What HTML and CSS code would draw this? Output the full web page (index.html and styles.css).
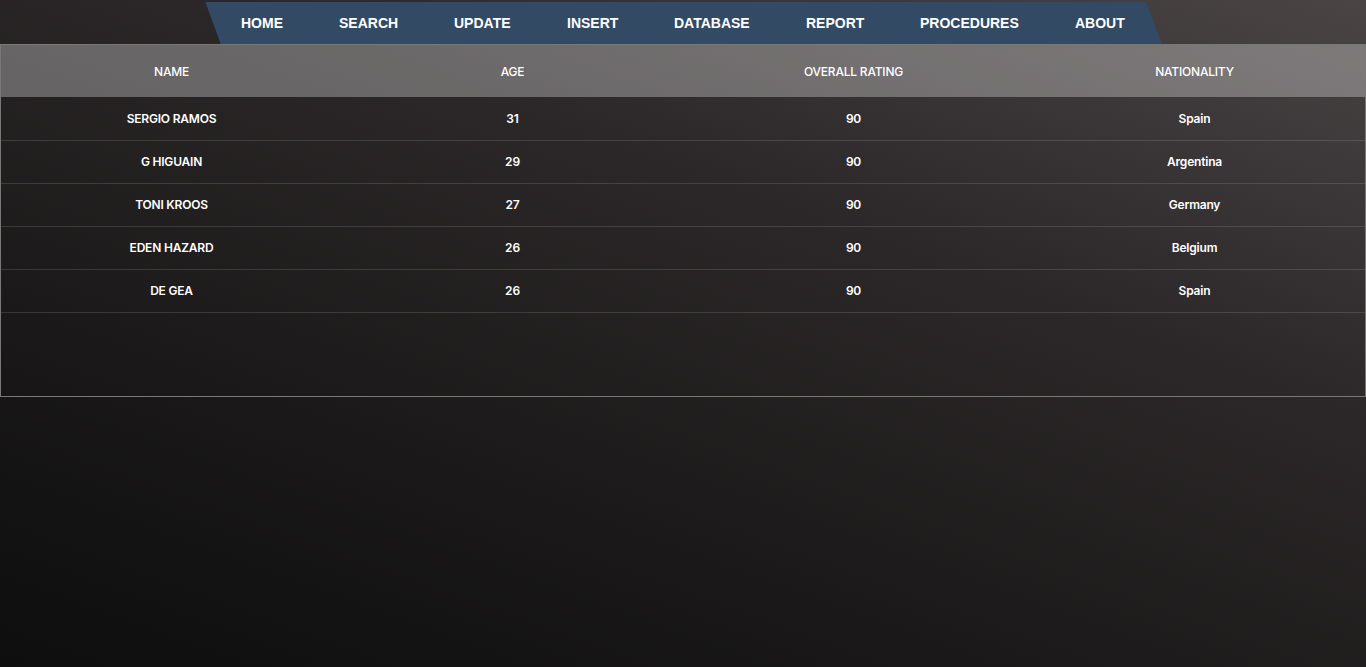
FILE: index.html
```html
<!DOCTYPE html>
<html lang="en">
<head>
<meta charset="utf-8">
<title>Players</title>
<link rel="stylesheet" href="styles.css">
</head>
<body>
<header class="topbar">
  <nav class="menu">
    <a class="menu-item" href="#"><span>HOME</span></a>
    <a class="menu-item" href="#"><span>SEARCH</span></a>
    <a class="menu-item" href="#"><span>UPDATE</span></a>
    <a class="menu-item" href="#"><span>INSERT</span></a>
    <a class="menu-item" href="#"><span>DATABASE</span></a>
    <a class="menu-item" href="#"><span>REPORT</span></a>
    <a class="menu-item" href="#"><span>PROCEDURES</span></a>
    <a class="menu-item" href="#"><span>ABOUT</span></a>
  </nav>
</header>
<main class="table-wrap">
  <table class="players">
    <thead>
      <tr><th>NAME</th><th>AGE</th><th>OVERALL RATING</th><th>NATIONALITY</th></tr>
    </thead>
    <tbody>
      <tr><td>SERGIO RAMOS</td><td>31</td><td>90</td><td>Spain</td></tr>
      <tr><td>G HIGUAIN</td><td>29</td><td>90</td><td>Argentina</td></tr>
      <tr><td>TONI KROOS</td><td>27</td><td>90</td><td>Germany</td></tr>
      <tr><td>EDEN HAZARD</td><td>26</td><td>90</td><td>Belgium</td></tr>
      <tr><td>DE GEA</td><td>26</td><td>90</td><td>Spain</td></tr>
    </tbody>
  </table>
</main>
</body>
</html>
```

FILE: styles.css
```css
* { box-sizing: border-box; }

html, body {
  margin: 0;
  height: 100%;
}

body {
  min-height: 667px;
  background: linear-gradient(200deg, #4a4445 0%, #2c2829 35%, #1a1818 70%, #0e0e0e 100%);
  font-family: "Inter", "Roboto", sans-serif;
  color: #ffffff;
  overflow: hidden;
}

.topbar {
  height: 44px;
  padding-top: 2px;
  display: flex;
  justify-content: center;
}

.menu {
  display: flex;
  height: 42px;
  padding: 0 1px 0 0;
  background: #324a64;
  transform: skewX(20deg);
}

.menu-item {
  display: flex;
  align-items: center;
  padding: 0 28px;
  color: #ffffff;
  text-decoration: none;
  font-family: "Liberation Sans", Arial, sans-serif;
  font-weight: 700;
  font-size: 14px;
}

.menu-item span {
  display: block;
  transform: skewX(-20deg);
}

.table-wrap {
  height: 353px;
  border: 1px solid #7a7777;
}

.players {
  width: 100%;
  table-layout: fixed;
  border-collapse: collapse;
}

.players th {
  height: 52px;
  padding: 0;
  background: rgba(255, 255, 255, 0.3);
  font-weight: 500;
  font-size: 12px;
  text-align: center;
  letter-spacing: -0.2px;
}

.players td {
  height: 43px;
  padding: 0;
  border-bottom: 1px solid rgba(255, 255, 255, 0.13);
  font-weight: 600;
  font-size: 12px;
  text-align: center;
  letter-spacing: -0.2px;
}
```
